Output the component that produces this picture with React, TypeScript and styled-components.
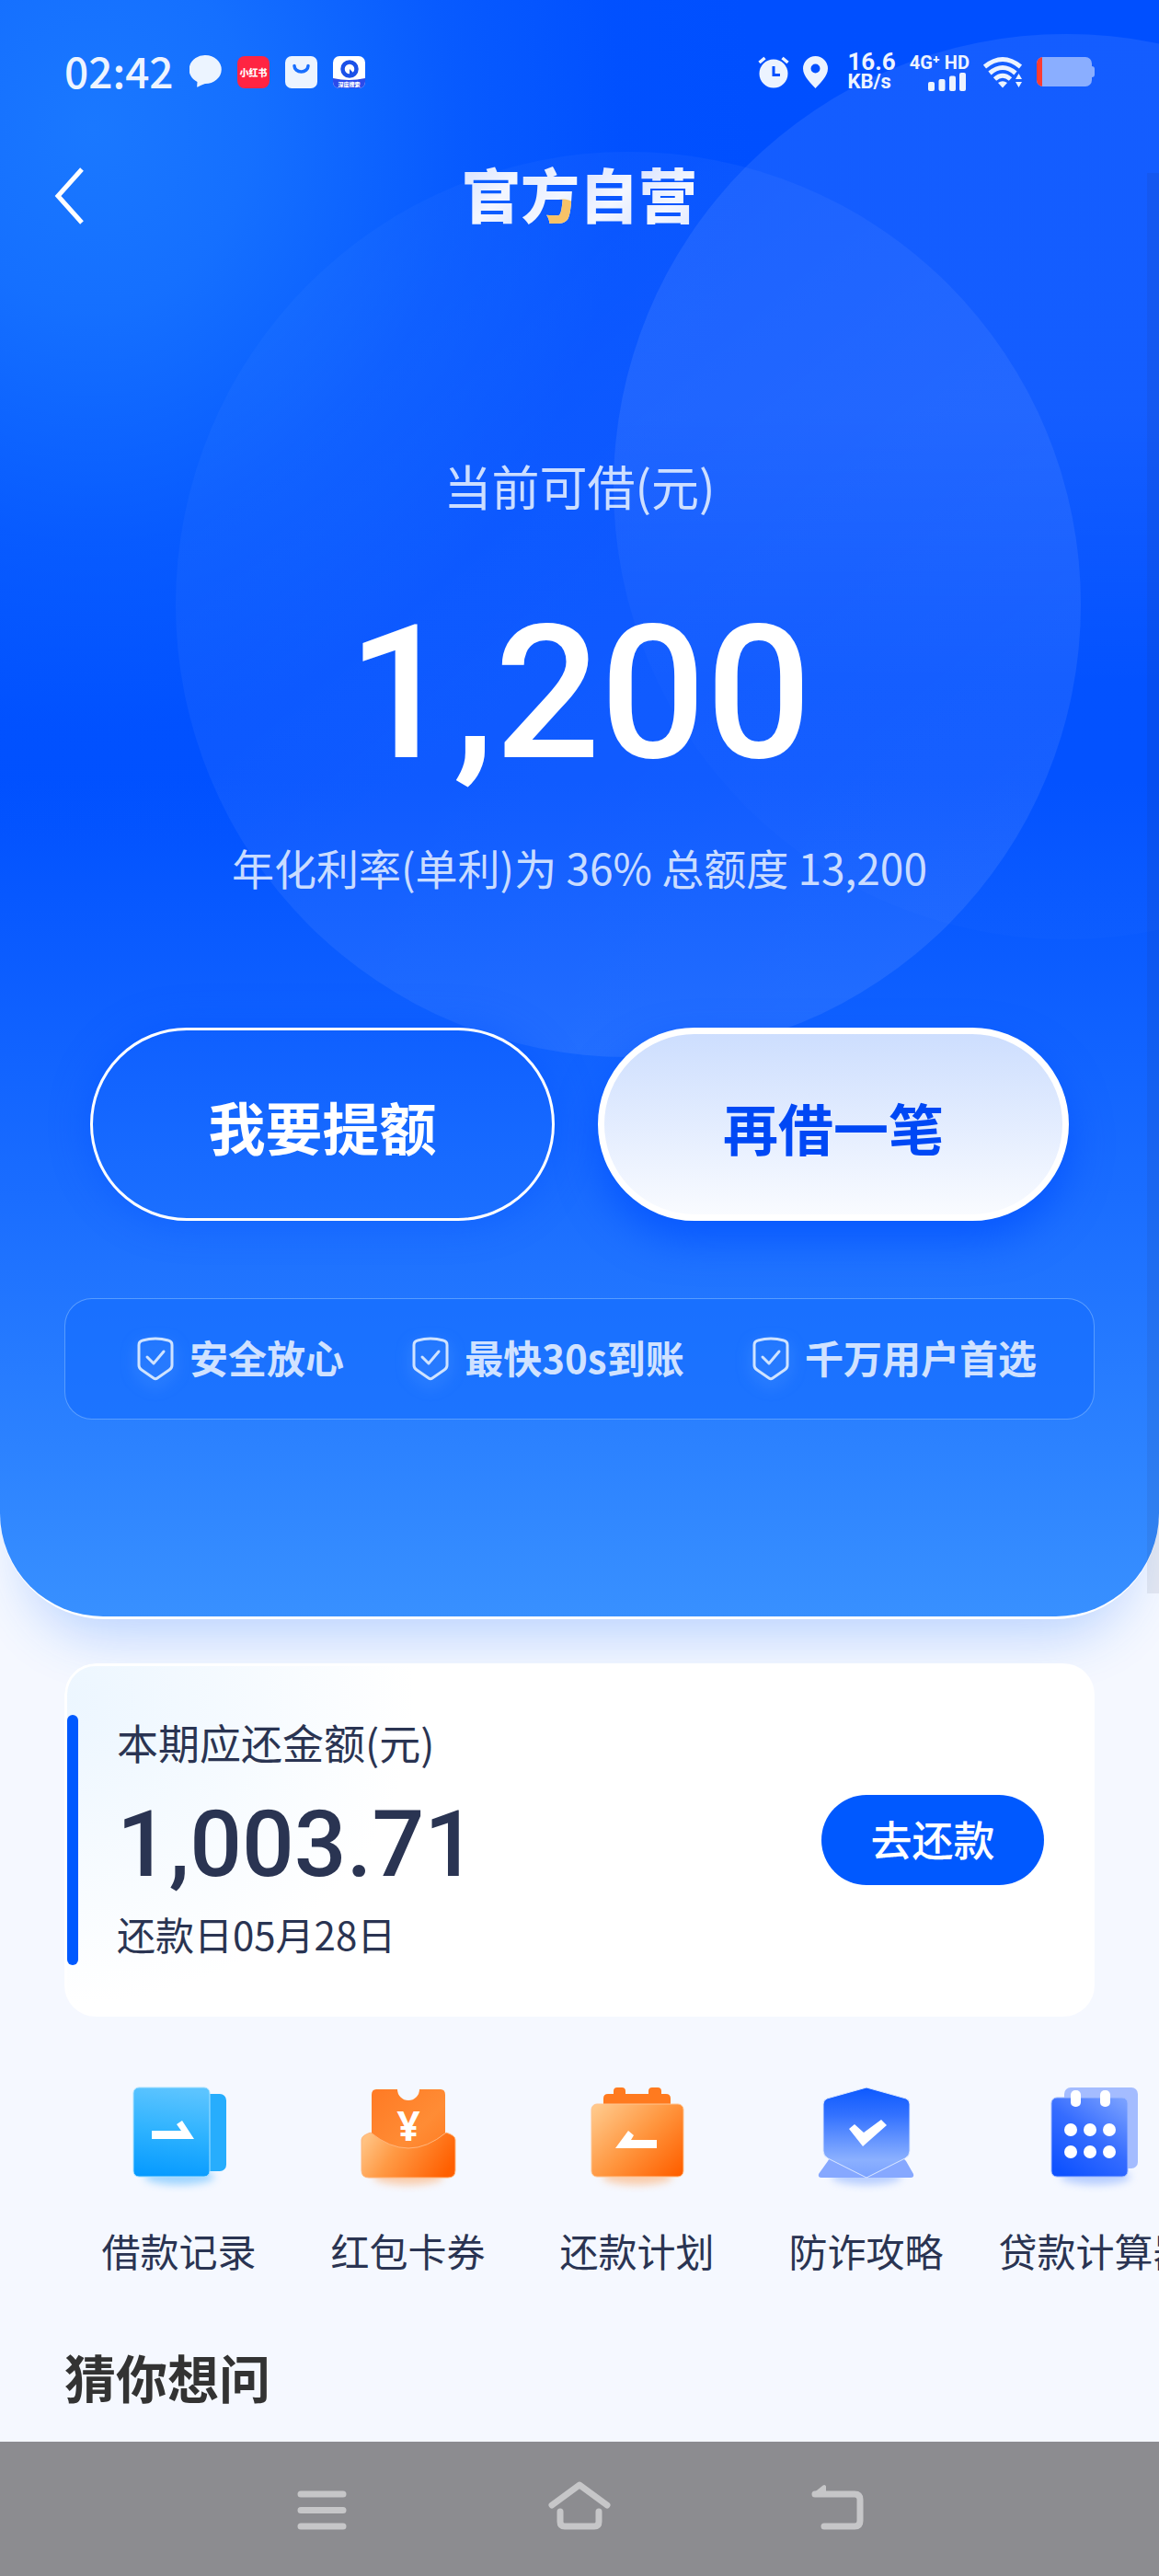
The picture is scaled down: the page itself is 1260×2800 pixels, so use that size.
import React from "react";
import styled, { createGlobalStyle, css } from "styled-components";

const numeralFont = `Roboto, "Noto Sans CJK SC", sans-serif`;

const GlobalStyle = createGlobalStyle`
  *, *::before, *::after { box-sizing: border-box; }
  body {
    margin: 0;
    background: #f5f8ff;
    font-family: "Noto Sans CJK SC", "Noto Sans", sans-serif;
    color: #2a3452;
  }
  button { font: inherit; border: 0; padding: 0; background: none; cursor: pointer; }
`;

const Page = styled.div`
  position: relative;
  min-height: 100vh;
  display: flex;
  flex-direction: column;
  overflow: hidden;
`;

const ScrollThumb = styled.div`
  position: absolute;
  z-index: 3;
  right: 0;
  top: 188px;
  width: 13px;
  height: 1544px;
  background: rgba(40, 40, 60, 0.08);
`;

const Hero = styled.section`
  position: relative;
  z-index: 0;
  overflow: hidden;
  padding-bottom: 214px;
  border-radius: 0 0 112px 112px;
  background:
    radial-gradient(ellipse 720px 820px at 100px 140px, #1a78ff 0%, rgba(23, 115, 255, 0.9) 24%, rgba(14, 100, 255, 0.55) 55%, rgba(5, 86, 255, 0.2) 80%, rgba(0, 80, 255, 0) 100%),
    linear-gradient(180deg, #004fff 0, #0050ff 850px, #1a6dff 1300px, #3890ff 100%);

  &::before,
  &::after {
    content: "";
    position: absolute;
    z-index: -1;
    width: 984px;
    height: 984px;
    border-radius: 50%;
  }
  &::before {
    left: calc(50% - 439px);
    top: 165px;
    background: linear-gradient(140deg, rgba(255, 255, 255, 0.01) 0%, rgba(255, 255, 255, 0.06) 50%, rgba(255, 255, 255, 0.09) 100%);
  }
  &::after {
    left: calc(50% + 37px);
    top: 37px;
    background: linear-gradient(180deg, rgba(255, 255, 255, 0.08) 0%, rgba(255, 255, 255, 0.08) 42%, rgba(255, 255, 255, 0.01) 72%);
  }
`;

const HeroFrame = styled.div`
  padding-bottom: 3px;
  border-radius: 0 0 114px 114px;
  background: #fff;
  box-shadow: 0 48px 60px -32px rgba(40, 120, 255, 0.3);
`;

const StatusBar = styled.div`
  display: flex;
  align-items: center;
  justify-content: space-between;
  height: 100px;
  padding: 56px 70px 0;
  color: #eef4ff;
`;

const StatusGroup = styled.div<{ $gap: number }>`
  display: flex;
  align-items: center;
  gap: ${(p) => p.$gap}px;
`;

const Clock = styled.time`
  padding-bottom: 4px;
  font-size: 46px;
  line-height: 40px;
  font-weight: 500;
`;

const StackedText = styled.div<{ $align?: string; $lead?: number }>`
  display: flex;
  flex-direction: column;
  align-items: ${(p) => p.$align ?? "flex-start"};
  margin-left: ${(p) => p.$lead ?? 0}px;
  font-family: ${numeralFont};
  font-weight: 700;
`;

const StatusLine = styled.span<{ $size: number }>`
  font-size: ${(p) => p.$size}px;
  line-height: 22px;
`;

const Header = styled.header`
  display: grid;
  grid-template-columns: 1fr auto 1fr;
  align-items: center;
  height: 90px;
  margin-top: 68px;
  padding: 0 56px;
`;

const BackButton = styled.button`
  display: flex;
  justify-self: start;
`;

const Title = styled.h1`
  margin: 0;
  padding-bottom: 8px;
  display: flex;
  font-size: 64px;
  line-height: 82px;
  font-weight: 900;
`;

const TitleGlyph = styled.span<{ $accent?: boolean }>`
  color: transparent;
  background: ${(p) =>
    p.$accent
      ? "radial-gradient(circle 20px at 46px 68px, #f7c267 0 19px, transparent 20px), linear-gradient(135deg, #dbe5ff, #f4f7ff 60%, #dfe8ff)"
      : "linear-gradient(135deg, #d5e0ff, #f4f7ff 60%, #dfe8ff)"};
  -webkit-background-clip: text;
  background-clip: text;
`;

const Quota = styled.div`
  display: flex;
  flex-direction: column;
  align-items: center;
  margin-top: 234px;
  color: rgba(235, 243, 255, 0.86);
`;

const QuotaLabel = styled.p`
  margin: 0;
  font-size: 52px;
  line-height: 72px;
`;

const QuotaAmount = styled.p`
  margin: 80px 0 46px;
  font-family: ${numeralFont};
  font-size: 202px;
  line-height: 220px;
  font-weight: 500;
  color: #fff;
`;

const QuotaNote = styled.p`
  margin: 0;
  font-size: 46px;
  line-height: 64px;
`;

const Actions = styled.div`
  display: grid;
  grid-template-columns: 505fr 512fr;
  gap: 47px;
  margin: 143px 98px 0;
`;

const ActionButton = styled.button<{ $primary?: boolean }>`
  height: 210px;
  padding-top: 4px;
  border-radius: 105px;
  font-weight: 700;
  ${(p) =>
    p.$primary
      ? css`
          border: 7px solid #fff;
          font-size: 60px;
          color: #0048f5;
          background: linear-gradient(180deg, #cddefe, #f9fbff);
          box-shadow: 0 20px 44px rgba(0, 80, 255, 0.75);
        `
      : css`
          border: 3px solid #fff;
          font-size: 62px;
          color: #fff;
          background: linear-gradient(180deg, #0f60ff, #1b6fff);
          box-shadow: 0 0 44px rgba(0, 80, 255, 0.45);
        `}
`;

const Perks = styled.ul`
  list-style: none;
  display: flex;
  align-items: center;
  justify-content: space-between;
  height: 132px;
  margin: 84px 70px 0;
  padding: 0 62px 0 78px;
  border: 1px solid rgba(130, 185, 255, 0.6);
  border-radius: 30px;
  background: rgba(20, 108, 255, 0.6);
`;

const Perk = styled.li`
  display: flex;
  align-items: center;
  gap: 17px;
  font-size: 42px;
  line-height: 56px;
  font-weight: 700;
  color: #d0e2ff;
`;

const PerkLabel = styled.span`
  padding-bottom: 4px;
`;

const PerkIcon = styled.svg`
  flex: none;
  filter: drop-shadow(0 6px 8px rgba(140, 195, 255, 0.5));
`;

const RepayCard = styled.section`
  position: relative;
  z-index: 1;
  display: flex;
  align-items: center;
  margin: 48px 70px 0;
  padding: 56px 55px 56px 3px;
  border-radius: 34px;
  background: radial-gradient(ellipse 380px 330px at 0 40px, #ecf6ff 0, #fff 100%) #fff;
  box-shadow: inset 0 0 0 3px #fff;
`;

const RepayInfo = styled.div`
  flex: 1;
  display: flex;
  flex-direction: column;
  gap: 12px;
  padding-left: 42px;
`;

const AccentBar = styled.div`
  align-self: stretch;
  width: 12px;
  border-radius: 6px;
  background: #0059ff;
`;

const RepayText = styled.p<{ $size: number }>`
  margin: 0;
  padding-bottom: 4px;
  font-size: ${(p) => p.$size}px;
  line-height: 60px;
`;

const RepayAmount = styled.p`
  margin: 0;
  padding-top: 10px;
  font-family: ${numeralFont};
  font-size: 100px;
  line-height: 110px;
  font-weight: 500;
`;

const RepayButton = styled.button`
  width: 242px;
  height: 98px;
  padding-bottom: 4px;
  border-radius: 49px;
  background: #0059ff;
  color: #fff;
  font-size: 45px;
  font-weight: 500;
`;

const Shortcuts = styled.nav`
  display: flex;
  margin: 71px 0 0 70px;
  overflow: hidden;
`;

const Shortcut = styled.a`
  flex: none;
  width: 249px;
  display: flex;
  flex-direction: column;
  align-items: center;
  gap: 33px;
  color: #2a3452;
  text-decoration: none;
  font-size: 42px;
  line-height: 60px;
  white-space: nowrap;
`;

const SharedDefs = styled.svg`
  position: absolute;
`;

const FaqTitle = styled.h2`
  margin: 67px 70px 31px;
  font-size: 56px;
  line-height: 80px;
  font-weight: 700;
  color: #333;
`;

const SystemNav = styled.footer`
  display: flex;
  align-items: center;
  justify-content: center;
  gap: 200px;
  height: 147px;
  margin-top: auto;
  background: #8c8c90;
`;

const SystemButton = styled.button`
  width: 80px;
  height: 80px;
  display: flex;
`;

const ShieldMark = () => (
  <PerkIcon width="40" height="48" viewBox="0 0 40 48" fill="none" stroke="#cfe3ff" strokeWidth="3" strokeLinejoin="round" strokeLinecap="round">
    <path d="M2 9Q2 5 6 4Q20 0 34 4Q38 5 38 9V31Q38 34 35 36L22 45Q20 46.500 18 45L5 36Q2 34 2 31Z" />
    <path d="M11 22L18 29L29 16" />
  </PerkIcon>
);

const NotificationIcons = () => (
  <>
    <svg width="35" height="36" viewBox="0 0 35 36">
      <path d="M17.500 0A17.500 15.500 0 1 1 17 31Q13 32 9 34.500Q8 35 8.200 33.500L8.500 29A17.500 15.500 0 0 1 17.500 0Z" fill="#ecf4ff" />
    </svg>
    <svg width="35" height="35" viewBox="0 0 35 35">
      <rect width="35" height="35" rx="8" fill="#ff2442" />
      <text x="17.500" y="22" textAnchor="middle" fontSize="10" fontWeight="900" fill="#fff">小红书</text>
    </svg>
    <svg width="35" height="35" viewBox="0 0 35 35">
      <rect width="35" height="35" rx="7" fill="#ecf4ff" />
      <path d="M10 10.500A7.500 6.500 0 0 0 25 10.500" fill="none" stroke="#176eff" strokeWidth="3.500" strokeLinecap="round" />
    </svg>
    <svg width="35" height="35" viewBox="0 0 35 35">
      <clipPath id="appClip"><rect width="35" height="35" rx="7" /></clipPath>
      <g clipPath="url(#appClip)">
        <rect width="35" height="35" fill="#fff" />
        <path d="M0 24Q17.500 28 35 24V35H0Z" fill="#2b4bea" />
        <circle cx="18" cy="14" r="7.500" fill="none" stroke="#1b51e8" strokeWidth="4.500" />
        <path d="M18 14L24 20L18 20Z" fill="#1b51e8" />
        <text x="17.500" y="32.500" textAnchor="middle" fontSize="6" fontWeight="900" fill="#fff">深度搜索</text>
      </g>
    </svg>
  </>
);

const AlarmIcon = () => (
  <svg width="34" height="35" viewBox="0 0 34 35">
    <circle cx="17" cy="19" r="15.500" fill="#ecf3ff" />
    <path d="M1.500 7L7.500 2M32.500 7L26.500 2" stroke="#ecf3ff" strokeWidth="3.500" />
    <path d="M17 11V20.500H24" fill="none" stroke="#0050ff" strokeWidth="3" />
  </svg>
);

const PinIcon = () => (
  <svg width="27" height="35" viewBox="0 0 27 35">
    <path fillRule="evenodd" fill="#ecf3ff" d="M13.500 0A13.500 13.500 0 0 1 27 13.500C27 22 18 30 13.500 35C9 30 0 22 0 13.500A13.500 13.500 0 0 1 13.500 0ZM13.500 8.500A5 5 0 1 0 13.500 18.500A5 5 0 1 0 13.500 8.500Z" />
  </svg>
);

const SignalBars = () => (
  <svg width="45" height="20" viewBox="0 0 45 20" fill="#ecf3ff">
    <rect x="0" y="10" width="7" height="10" rx="2" />
    <rect x="11.500" y="7" width="7" height="13" rx="2" />
    <rect x="23" y="3.500" width="7" height="16.500" rx="2" />
    <rect x="34" y="0" width="7" height="20" rx="2" />
  </svg>
);

const WifiIcon = () => (
  <svg width="43" height="35" viewBox="0 0 43 35" fill="none" stroke="#ecf3ff" strokeWidth="5">
    <path d="M1.500 11.500Q21 -4.500 40.500 11.500" />
    <path d="M7 18.500Q21 6.500 35 18.500" />
    <path d="M12.500 25Q21 17.500 29.500 25" />
    <path d="M16 29Q21 25.500 26 29L21 34.500Z" fill="#ecf3ff" stroke="none" />
    <path d="M35 25L38.500 19L42 25ZM35 28L38.500 34L42 28Z" fill="#ecf3ff" stroke="none" />
  </svg>
);

const BatteryIcon = () => (
  <svg width="63" height="32" viewBox="0 0 63 32">
    <clipPath id="cell"><rect width="60" height="32" rx="7" /></clipPath>
    <g clipPath="url(#cell)">
      <rect width="60" height="32" fill="#8aaeff" />
      <rect width="6" height="32" fill="#ff3b30" />
    </g>
    <path d="M60 10Q63 10 63 13V19Q63 22 60 22Z" fill="#8aaeff" />
  </svg>
);

const Glow = ({ color }: { color: string }) => (
  <ellipse cx="60" cy="103" rx="38" ry="9" fill={color} opacity="0.5" filter="url(#soft)" />
);

const icons: Record<string, React.ReactNode> = {
  records: (
    <>
      <Glow color="#4cb2ff" />
      <rect x="78" y="13" width="33" height="84" rx="7" fill="#27adfd" />
      <rect x="10" y="6" width="83" height="97" rx="6" fill="url(#gRecords)" stroke="#a9e2ff" />
      <path d="M30 53H62L57 46L63 42L76 62H30Z" fill="#fff" />
    </>
  ),
  coupons: (
    <>
      <Glow color="#ffa25a" />
      <path d="M25 8H48A12 12 0 0 0 72 8H95Q100 8 100 14V85H20V14Q20 8 25 8Z" fill="url(#gTicket)" />
      <path d="M9 63Q9 58 19 55Q60 89 101 55Q111 58 111 63V96Q111 104 103 104H17Q9 104 9 96Z" fill="url(#gPocket)" stroke="#ffb67c" />
      <text x="60" y="64" textAnchor="middle" fontSize="44" fontWeight="700" fill="#fff" fontFamily="Noto Sans">¥</text>
    </>
  ),
  plan: (
    <>
      <Glow color="#ffa25a" />
      <path d="M23 40V18Q23 13 28 13H34V10Q34 6 38 6H43Q47 6 47 10V13H72V10Q72 6 76 6H82Q86 6 86 10V13H91Q96 13 96 18V40Z" fill="#ff7a1f" />
      <rect x="10" y="24" width="100" height="79" rx="6" fill="url(#gPlan)" stroke="#ffc490" />
      <path d="M36 72L50 53L56 58L53 63H81V72Z" fill="#fff" />
    </>
  ),
  shield: (
    <>
      <Glow color="#7ba6ff" />
      <path d="M18 86Q19 83 23 83H97Q101 83 103 86L111 100Q112 104 108 104H11Q7 104 8 100Z" fill="#86a8ff" />
      <path d="M60 6L103 18Q107 20 107 24V75Q107 80 102 83L60 104L18 83Q13 80 13 75V24Q13 20 17 18Z" fill="url(#gShield)" stroke="#dce8ff" />
      <path d="M41 51L47 46L57 55L76 41L82 47L56 70Z" fill="#fff" />
    </>
  ),
  calculator: (
    <>
      <Glow color="#7ba6ff" />
      <rect x="26" y="6" width="80" height="88" rx="7" fill="#a4bcff" />
      <rect x="12" y="17" width="83" height="86" rx="6" fill="url(#gCalc)" stroke="#9fbaff" />
      <rect x="33" y="9" width="11" height="18" rx="5" fill="#fff" />
      <rect x="65" y="9" width="11" height="18" rx="5" fill="#fff" />
      {[52, 76].map((y) => [33, 54, 75].map((x) => <circle key={`${x}-${y}`} cx={x} cy={y} r="7" fill="#fff" />))}
    </>
  ),
};

const shortcuts = [
  { icon: "records", label: "借款记录" },
  { icon: "coupons", label: "红包卡券" },
  { icon: "plan", label: "还款计划" },
  { icon: "shield", label: "防诈攻略" },
  { icon: "calculator", label: "贷款计算器" },
];

const perks = ["安全放心", "最快30s到账", "千万用户首选"];

const IconDefs = () => (
  <SharedDefs width="0" height="0" aria-hidden="true">
    <defs>
      <filter id="soft" x="-30%" y="-100%" width="160%" height="300%"><feGaussianBlur stdDeviation="4" /></filter>
      <linearGradient id="gRecords" x1="0.4" y1="0" x2="0.3" y2="1"><stop stopColor="#5cc4ff" /><stop offset="0.5" stopColor="#2db2ff" /><stop offset="1" stopColor="#069aff" /></linearGradient>
      <linearGradient id="gTicket" x1="0" y1="0" x2="1" y2="1"><stop stopColor="#ff7a24" /><stop offset="0.6" stopColor="#ff8c35" /><stop offset="1" stopColor="#ff7a20" /></linearGradient>
      <linearGradient id="gPocket" x1="0" y1="0.3" x2="1" y2="0.6"><stop stopColor="#ffc181" /><stop offset="0.35" stopColor="#ff9a45" /><stop offset="1" stopColor="#ff5f00" /></linearGradient>
      <linearGradient id="gPlan" x1="0" y1="0.1" x2="1" y2="0.9"><stop stopColor="#ffc88a" /><stop offset="0.5" stopColor="#ff963f" /><stop offset="1" stopColor="#ff6000" /></linearGradient>
      <linearGradient id="gShield" x1="0" y1="0" x2="0" y2="1"><stop stopColor="#0c59ff" /><stop offset="0.3" stopColor="#3271ff" /><stop offset="0.8" stopColor="#8bb0ff" /><stop offset="1" stopColor="#7aa2ff" /></linearGradient>
      <linearGradient id="gCalc" x1="0.9" y1="0" x2="0.2" y2="1"><stop stopColor="#79a0ff" /><stop offset="0.5" stopColor="#356cff" /><stop offset="1" stopColor="#0e52ff" /></linearGradient>
    </defs>
  </SharedDefs>
);

export default function App() {
  return (
    <Page>
      <GlobalStyle />
      <IconDefs />
      <ScrollThumb />
      <HeroFrame>
        <Hero>
          <StatusBar>
            <StatusGroup $gap={17}>
              <Clock>02:42</Clock>
              <NotificationIcons />
            </StatusGroup>
            <StatusGroup $gap={15}>
              <AlarmIcon />
              <PinIcon />
              <StackedText $lead={6}>
                <StatusLine $size={26}>16.6</StatusLine>
                <StatusLine $size={22}>KB/s</StatusLine>
              </StackedText>
              <StackedText $align="flex-end">
                <StatusLine $size={20}>4G⁺ HD</StatusLine>
                <SignalBars />
              </StackedText>
              <WifiIcon />
              <BatteryIcon />
            </StatusGroup>
          </StatusBar>
          <Header>
            <BackButton aria-label="返回">
              <svg width="36" height="64" viewBox="0 0 36 64" fill="none" stroke="#fff" strokeWidth="5">
                <path d="M33 3L7 32L33 61" />
              </svg>
            </BackButton>
            <Title>
              <TitleGlyph>官</TitleGlyph>
              <TitleGlyph $accent>方</TitleGlyph>
              <TitleGlyph>自</TitleGlyph>
              <TitleGlyph>营</TitleGlyph>
            </Title>
          </Header>
          <Quota>
            <QuotaLabel>当前可借(元)</QuotaLabel>
            <QuotaAmount>1,200</QuotaAmount>
            <QuotaNote>年化利率(单利)为 36% 总额度 13,200</QuotaNote>
          </Quota>
          <Actions>
            <ActionButton>我要提额</ActionButton>
            <ActionButton $primary>再借一笔</ActionButton>
          </Actions>
          <Perks>
            {perks.map((perk) => (
              <Perk key={perk}>
                <ShieldMark />
                <PerkLabel>{perk}</PerkLabel>
              </Perk>
            ))}
          </Perks>
        </Hero>
      </HeroFrame>

      <RepayCard>
        <AccentBar />
        <RepayInfo>
          <RepayText $size={45}>本期应还金额(元)</RepayText>
          <RepayAmount>1,003.71</RepayAmount>
          <RepayText $size={42}>还款日05月28日</RepayText>
        </RepayInfo>
        <RepayButton>去还款</RepayButton>
      </RepayCard>

      <Shortcuts>
        {shortcuts.map(({ icon, label }) => (
          <Shortcut key={icon} href="#">
            <svg width="120" height="120" viewBox="0 0 120 120">
              {icons[icon]}
            </svg>
            {label}
          </Shortcut>
        ))}
      </Shortcuts>

      <FaqTitle>猜你想问</FaqTitle>

      <SystemNav>
        <SystemButton aria-label="最近任务">
          <svg width="80" height="80" viewBox="0 0 80 80" fill="none" stroke="#c6c6c8" strokeWidth="7" strokeLinecap="round">
            <path d="M17 23H63M17 40.500H63M17 58H63" />
          </svg>
        </SystemButton>
        <SystemButton aria-label="主屏幕">
          <svg width="80" height="80" viewBox="0 0 80 80" fill="none" stroke="#c6c6c8" strokeWidth="7" strokeLinecap="round" strokeLinejoin="round">
            <path d="M10 35L40 13L70 35M19 42V53Q19 58 24 58H56Q61 58 61 53V42" />
          </svg>
        </SystemButton>
        <SystemButton aria-label="返回上一页">
          <svg width="80" height="80" viewBox="0 0 80 80" fill="none" stroke="#c6c6c8" strokeWidth="7" strokeLinecap="round" strokeLinejoin="round">
            <path d="M16 23H59Q65 23 65 29V52Q65 58 59 58H26" />
            <path d="M16 23L26 15V23Z" fill="#c6c6c8" strokeWidth="4" />
          </svg>
        </SystemButton>
      </SystemNav>
    </Page>
  );
}
